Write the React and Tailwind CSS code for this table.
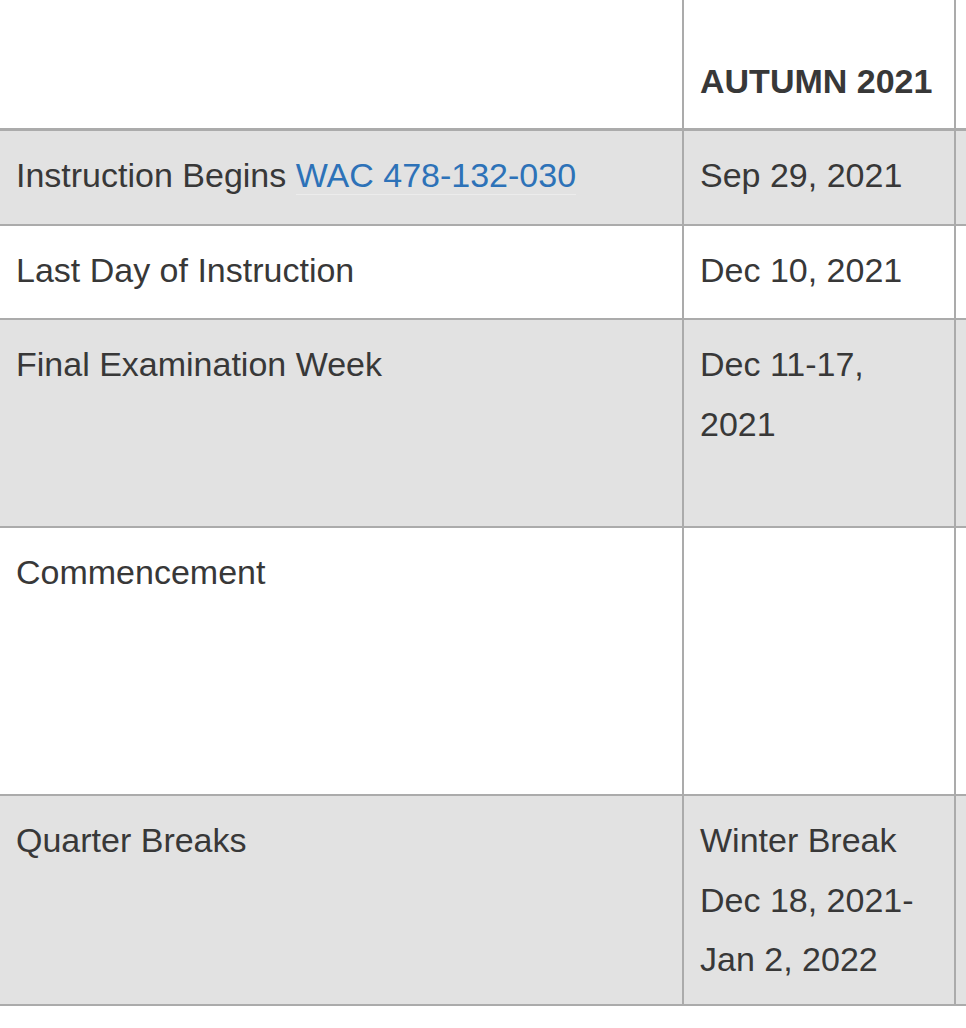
const rows = [
  {
    label: (
      <>
        Instruction Begins{" "}
        <a href="#" className="text-[#2d72b8] border-b border-[#ececec]">
          WAC 478-132-030
        </a>
      </>
    ),
    autumn: "Sep 29, 2021",
    shaded: true,
    h: "h-[95px]",
  },
  { label: "Last Day of Instruction", autumn: "Dec 10, 2021", shaded: false, h: "h-[94px]" },
  {
    label: "Final Examination Week",
    autumn: (
      <>
        Dec 11-17,
        <br />
        2021
      </>
    ),
    shaded: true,
    h: "h-[208px]",
  },
  { label: "Commencement", autumn: "", shaded: false, h: "h-[268px]" },
  {
    label: "Quarter Breaks",
    autumn: (
      <>
        Winter Break
        <br />
        Dec 18, 2021-
        <br />
        Jan 2, 2022
      </>
    ),
    shaded: true,
    h: "h-[210px]",
  },
];

function Row({ row }) {
  return (
    <div
      className={`flex border-b-2 border-[#ababab] ${row.h} ${row.shaded ? "bg-[#e2e2e2]" : "bg-white"}`}
    >
      <div className="w-[684px] shrink-0 border-r-2 border-[#ababab] px-4 pt-[15px]">{row.label}</div>
      <div className="w-[272px] shrink-0 border-r-2 border-[#ababab] px-4 pt-[15px]">{row.autumn}</div>
      <div className="flex-1" />
    </div>
  );
}

export default function App() {
  return (
    <div
      className="w-[966px] overflow-hidden bg-white text-[#383838] text-[34px] leading-[59.5px]"
      style={{ fontFamily: '"Liberation Sans", Arial, sans-serif' }}
    >
      <div className="flex h-[131px] border-b-[3px] border-[#ababab]">
        <div className="w-[684px] shrink-0 border-r-2 border-[#ababab]" />
        <div className="w-[272px] shrink-0 border-r-2 border-[#ababab] px-4 pb-[17px] flex items-end font-bold">
          AUTUMN 2021
        </div>
        <div className="flex-1" />
      </div>
      {rows.map((row, i) => (
        <Row key={i} row={row} />
      ))}
    </div>
  );
}
